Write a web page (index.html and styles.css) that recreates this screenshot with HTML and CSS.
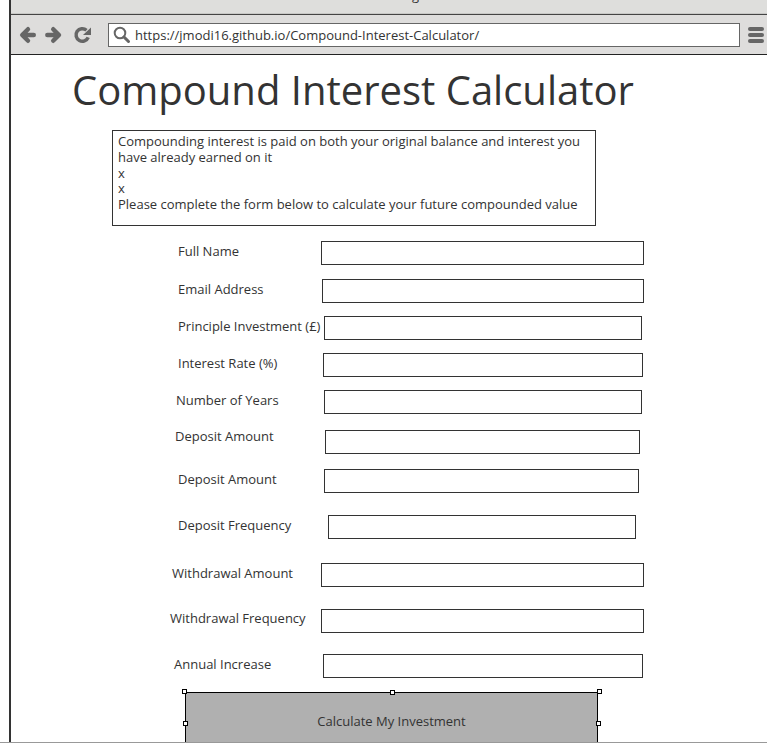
FILE: index.html
```html
<!DOCTYPE html>
<html lang="en">
<head>
<meta charset="utf-8">
<title>Compound Interest Calculator</title>
<link rel="stylesheet" href="styles.css">
</head>
<body>
<div class="browser">
  <div class="titlebar"><span>g</span></div>
  <div class="toolbar">
    <svg class="nav" width="76" height="20" viewBox="0 0 76 20" fill="none" stroke="#666" stroke-width="4.400" stroke-linecap="round" stroke-linejoin="round">
      <path d="M9 4.200 3.200 10 9 15.800M4 10h10.800"/>
      <path d="m34.200 4.200 5.800 5.800-5.800 5.800M39 10H28.300"/>
      <path d="M67.500 5.200A6.300 6.300 0 1 0 69.200 12.300" stroke-width="3.500" stroke-linecap="butt"/>
      <path d="M72 2.500v7.500h-8z" fill="#666" stroke="none"/>
    </svg>
    <div class="address">
      <svg class="search" width="18" height="18" viewBox="0 0 18 18" fill="none" stroke="#666">
        <circle cx="7" cy="7" r="5.300" stroke-width="2"/>
        <path d="m11 11 4.500 4.500" stroke-width="3" stroke-linecap="round"/>
      </svg>
      <span class="url">https://jmodi16.github.io/Compound-Interest-Calculator/</span>
    </div>
    <div class="menu"><i></i><i></i><i></i></div>
  </div>
  <main class="page">
    <h1>Compound Interest Calculator</h1>
    <div class="intro">
      Compounding interest is paid on both your original balance and interest you<br>
      have already earned on it<br>x<br>x<br>
      Please complete the form below to calculate your future compounded value
    </div>
    <form>
      <div class="row name"><label>Full Name</label><div class="field"></div></div>
      <div class="row email"><label>Email Address</label><div class="field"></div></div>
      <div class="row principal"><label>Principle Investment (£)</label><div class="field"></div></div>
      <div class="row rate"><label>Interest Rate (%)</label><div class="field"></div></div>
      <div class="row years"><label>Number of Years</label><div class="field"></div></div>
      <div class="row deposit"><label>Deposit Amount</label><div class="field"></div></div>
      <div class="row deposit-extra"><label>Deposit Amount</label><div class="field"></div></div>
      <div class="row deposit-frequency"><label>Deposit Frequency</label><div class="field"></div></div>
      <div class="row withdrawal"><label>Withdrawal Amount</label><div class="field"></div></div>
      <div class="row withdrawal-frequency"><label>Withdrawal Frequency</label><div class="field"></div></div>
      <div class="row increase"><label>Annual Increase</label><div class="field"></div></div>
      <div class="submit">
        <span>Calculate My Investment</span>
        <i class="handle top-left"></i><i class="handle top"></i><i class="handle top-right"></i>
        <i class="handle left"></i><i class="handle right"></i>
      </div>
    </form>
  </main>
</div>
</body>
</html>
```

FILE: styles.css
```css
* { box-sizing: border-box; }
body {
  margin: 0;
  height: 743px;
  overflow: hidden;
  border-bottom: 1px solid #999;
  background: #fff;
  color: #333;
  font: 13px/16px "Open Sans", "Noto Sans", sans-serif;
}
.browser {
  height: 742px;
  margin-left: 9px;
  border-left: 2px solid #333;
  overflow: hidden;
}
.titlebar {
  height: 15px;
  overflow: hidden;
  background: #dededc;
  border-bottom: 1px solid #444;
  box-shadow: inset 0 -1px #c8c8c6;
  padding-left: 401px;
}
.titlebar span { display: block; margin-top: -13px; }
.toolbar {
  display: flex;
  align-items: flex-start;
  height: 40px;
  padding: 8px 3px 0 8px;
  background: #dedddc;
  border-bottom: 1px solid #222;
}
.nav { flex: none; margin-top: 2px; }
.address {
  display: flex;
  width: 632px;
  height: 24px;
  margin-left: 13px;
  padding-left: 4px;
  border: 1px solid #666;
  background: #fff;
}
.search { margin-top: 2px; }
.url { margin: 3px 0 0 4px; white-space: nowrap; }
.menu { display: grid; gap: 2px; margin: 4px 0 0 8px; }
.menu i { width: 16px; height: 4px; border-radius: 2px; background: #666; }
h1 {
  margin: 7px 0 0 61px;
  font-size: 40px;
  line-height: 56px;
  font-weight: 400;
  white-space: nowrap;
}
.intro {
  width: 484px;
  height: 96px;
  margin: 12px 0 15px 101px;
  padding: 3px 0 0 5px;
  border: 1px solid #333;
  line-height: 15.8px;
  white-space: nowrap;
}
.row { display: flex; height: 24px; margin-bottom: 13px; padding-left: 167px; }
.row label { width: 143px; padding-top: 2px; white-space: nowrap; }
.field { width: 323px; height: 24px; border: 1px solid #333; }
.name { margin-bottom: 14px; }
.email label { width: 144px; }
.email .field { width: 322px; }
.principal label { width: 146px; }
.principal .field, .years .field { width: 318px; }
.rate label { width: 145px; }
.rate .field, .increase .field { width: 320px; }
.years { padding-left: 165px; margin-bottom: 16px; }
.years label { width: 148px; }
.deposit { padding-left: 164px; margin-bottom: 15px; }
.deposit label { width: 150px; padding-top: 0; margin-top: -2px; }
.deposit .field, .deposit-extra .field { width: 315px; }
.deposit-extra { margin-bottom: 22px; }
.deposit-extra label { width: 146px; }
.deposit-frequency { margin-bottom: 24px; }
.deposit-frequency label { width: 150px; }
.deposit-frequency .field { width: 308px; }
.withdrawal { padding-left: 161px; margin-bottom: 22px; }
.withdrawal label { width: 149px; }
.withdrawal-frequency { padding-left: 159px; margin-bottom: 21px; }
.withdrawal-frequency label { width: 151px; padding-top: 1px; }
.increase { padding-left: 163px; margin-bottom: 14px; }
.increase label { width: 149px; }
.submit {
  position: relative;
  width: 413px;
  height: 64px;
  margin-left: 174px;
  padding-top: 20px;
  border: 1px solid #000;
  background: #b0b0b0;
  text-align: center;
}
.handle { position: absolute; width: 5px; height: 5px; border: 1px solid #000; background: #fff; }
.top-left { left: -4px; top: -4px; }
.top { left: 204px; top: -3px; }
.top-right { left: 411px; top: -4px; }
.left { left: -3px; top: 28px; }
.right { left: 410px; top: 28px; }
```
